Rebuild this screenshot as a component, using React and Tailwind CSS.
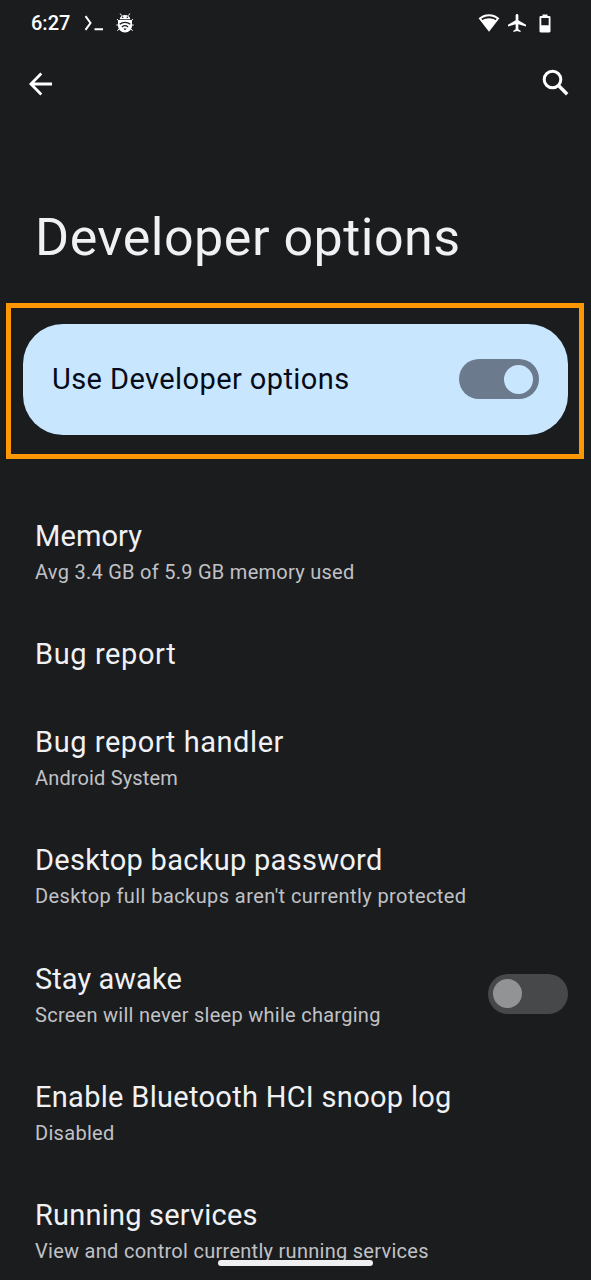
const rows = [
  { title: 'Memory', titleTracking: 'tracking-[0.1px]', sub: 'Avg 3.4 GB of 5.9 GB memory used', subTracking: 'tracking-[0.27px]' },
  { title: 'Bug report', titleTracking: 'tracking-[0.6px]' },
  { title: 'Bug report handler', titleTracking: 'tracking-[0.56px]', sub: 'Android System', subTracking: 'tracking-[0.15px]' },
  { title: 'Desktop backup password', titleTracking: 'tracking-[0.29px]', sub: "Desktop full backups aren't currently protected", subTracking: 'tracking-[0.42px]' },
  { title: 'Stay awake', titleTracking: 'tracking-[0.05px]', sub: 'Screen will never sleep while charging', subTracking: 'tracking-[0.27px]', toggle: true },
  { title: 'Enable Bluetooth HCI snoop log', titleTracking: 'tracking-[0.3px]', sub: 'Disabled', subTracking: 'tracking-[0.3px]' },
  { title: 'Running services', titleTracking: 'tracking-[0.2px]', sub: 'View and control currently running services', subTracking: 'tracking-[0.28px]' },
];

function BugIcon() {
  return (
    <svg className="ml-[13px] h-5 w-[18px]" viewBox="0 0 18 20" fill="none">
      <path d="M5.500 2.600 4.200.5M12.500 2.600 13.800.5" stroke="#fff" strokeWidth="1" />
      <path d="M3.700 6.200C4 3.500 6 1.900 9 1.900s5 1.600 5.300 4.300z" fill="#fff" />
      <path d="M2 7h14v5.500c0 3.800-3.100 7-7 7s-7-3.200-7-7z" fill="#fff" />
      <path d="M2.500 7.700 1 6M15.500 7.700 17 6M2.500 12H.3M15.500 12h2.200M3 16l-1.700 1.800M15 16l1.700 1.800" stroke="#fff" strokeWidth="1" />
      <circle cx="6.700" cy="4.300" r=".8" fill="#1b1c1e" />
      <circle cx="11.300" cy="4.300" r=".8" fill="#1b1c1e" />
      <path d="M3.700 11.300c3-2.700 7.600-2.700 10.600 0M5.900 13.900c1.800-1.500 4.400-1.500 6.200 0" stroke="#1b1c1e" strokeWidth="1.300" />
      <path d="M7.500 15.700c.9-.7 2.100-.7 3 0L9 17.300z" fill="#1b1c1e" />
    </svg>
  );
}

function StatusBar() {
  return (
    <div className="flex h-[46px] shrink-0 items-center pl-[31px] pr-[40px] text-white">
      <span className="w-[41px] whitespace-nowrap text-[20px] font-medium leading-6">6:27</span>
      <svg className="ml-[12px] h-4 w-[19px]" viewBox="0 0 19 16" fill="none" stroke="#fff" strokeWidth="2">
        <path d="m1.500 1.200 5 6.800-5 6.800M10.500 14.200H19" />
      </svg>
      <BugIcon />
      <svg className="ml-auto h-[18px] w-[22px]" viewBox="0 0 22 18" fill="#fff">
        <path fillRule="evenodd" d="M11 .2C6.900.2 3.200 1.800.6 4.300L11 17.800 21.400 4.300C18.800 1.800 15.100.2 11 .2Zm0 2.100c3 0 5.600.9 7.700 2.500l-1.100 1.400C15.700 5 13.500 4.300 11 4.300s-4.700.7-6.600 1.900L3.300 4.800C5.400 3.200 8 2.300 11 2.300Z" />
      </svg>
      <svg className="ml-[8px] h-[18px] w-[18px]" viewBox="2 2 20 20" fill="#fff">
        <path d="M22 16v-2l-8.500-5V3.500c0-.83-.67-1.500-1.500-1.500s-1.500.67-1.500 1.500V9L2 14v2l8.500-2.500V19L8 20.500V22l4-1 4 1v-1.500L13.500 19v-5.500L22 16z" />
      </svg>
      <svg className="ml-[13px] h-[19px] w-[12px]" viewBox="0 0 12 19" fill="#fff">
        <path fillRule="evenodd" d="M3.500.5h5V2h1.800c.7 0 1.200.5 1.200 1.200v14.100c0 .7-.5 1.200-1.200 1.200H1.700c-.7 0-1.200-.5-1.200-1.200V3.200C.5 2.500 1 2 1.700 2h1.800zM2.300 4v7.300h7.400V4z" />
      </svg>
    </div>
  );
}

export default function App() {
  return (
    <div className="relative flex h-[1280px] w-[591px] flex-col overflow-hidden bg-[#1b1c1e] font-['Roboto',sans-serif] text-[#f0f1f4]">
      <StatusBar />
      <header className="flex h-[76px] shrink-0 items-center justify-between pl-[29px] pr-[22px]">
        <svg className="h-6 w-6" viewBox="0 0 24 24" fill="none" stroke="#fff" strokeWidth="2.800">
          <path d="M23 12H2.500M12.300 1.500 1.900 12l10.400 10.500" />
        </svg>
        <svg className="mb-[3px] h-[27px] w-[27px]" viewBox="0 0 27 27" fill="none" stroke="#fff" strokeWidth="3">
          <circle cx="10.500" cy="10.500" r="8.300" />
          <path d="m16.500 16.500 8.700 8.700" strokeWidth="3.400" />
        </svg>
      </header>
      <h1 className="ml-[35px] mt-[84px] h-[64px] shrink-0 whitespace-nowrap text-[52px] leading-[64px] tracking-[0.5px]">Developer options</h1>
      <section className="ml-[6px] mr-[7px] mt-[33px] h-[156px] shrink-0 border-[5px] border-[#ff9604] px-3 pt-4">
        <div className="flex h-[111px] w-[545px] items-center justify-between rounded-[40px] bg-[#c9e6ff] px-[29px] pb-px">
          <span className="whitespace-nowrap text-[29px] leading-9 tracking-[0.41px] text-[#050b18]">Use Developer options</span>
          <span className="flex h-10 w-20 items-center justify-end rounded-full bg-[#6b7a8c] pr-[6px]">
            <span className="h-[29px] w-[29px] rounded-full bg-[#c9e6ff]" />
          </span>
        </div>
      </section>
      <main className="mt-[33px] shrink-0">
        {rows.map((row) => (
          <div key={row.title} className="flex items-center justify-between pb-[26.15px] pt-[26px] pl-[35px] pr-[23px]">
            <div className="whitespace-nowrap">
              <div className={`text-[29px] leading-9 ${row.titleTracking}`}>{row.title}</div>
              {row.sub && <div className={`pt-[6px] text-[20px] leading-6 text-[#c0c2c6] ${row.subTracking}`}>{row.sub}</div>}
            </div>
            {row.toggle && (
              <span className="flex h-10 w-20 items-center rounded-full bg-[#474849] pl-[5px]">
                <span className="h-[29px] w-[29px] rounded-full bg-[#929395]" />
              </span>
            )}
          </div>
        ))}
      </main>
      <div className="absolute left-[218px] top-[1260px] h-[6px] w-[155px] rounded-full bg-[#f0f0f2]" />
    </div>
  );
}
